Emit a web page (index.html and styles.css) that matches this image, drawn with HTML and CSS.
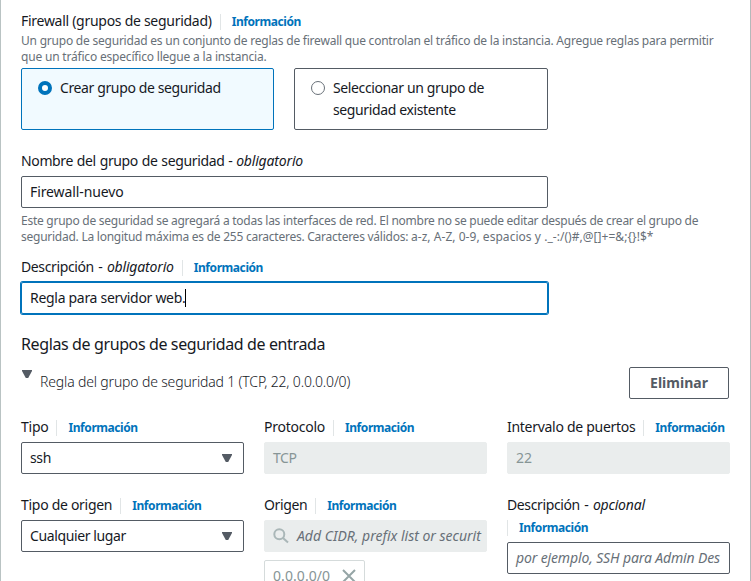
FILE: index.html
```html
<!DOCTYPE html>
<html lang="es">
<head>
<meta charset="utf-8">
<title>Firewall</title>
<link rel="stylesheet" href="styles.css">
</head>
<body>
<main class="panel">
  <section class="firewall">
    <div class="label"><span class="t-fw">Firewall (grupos de seguridad)</span><a class="info">Información</a></div>
    <p class="hint"><span class="line h1">Un grupo de seguridad es un conjunto de reglas de firewall que controlan el tráfico de la instancia. Agregue reglas para permitir</span> <span class="line h2">que un tráfico específico llegue a la instancia.</span></p>
    <div class="tiles">
      <div class="tile selected"><i class="radio"></i><span>Crear grupo de seguridad</span></div>
      <div class="tile"><i class="radio"></i><span>Seleccionar un grupo de<br>seguridad existente</span></div>
    </div>
  </section>
  <section class="name">
    <div class="label"><span class="t-name">Nombre del grupo de seguridad - <em>obligatorio</em></span></div>
    <div class="input wide"><span class="v-name">Firewall-nuevo</span></div>
    <p class="hint"><span class="line h3">Este grupo de seguridad se agregará a todas las interfaces de red. El nombre no se puede editar después de crear el grupo de</span> <span class="line h4">seguridad. La longitud máxima es de 255 caracteres. Caracteres válidos: <span class="chars">a-z, A-Z, 0-9, espacios y ._-:/()#,@[]+=&amp;;{}!$*</span></span></p>
  </section>
  <section class="desc">
    <div class="label"><span class="t-desc">Descripción - <em>obligatorio</em></span><a class="info">Información</a></div>
    <div class="input wide focus"><span class="v-desc">Regla para servidor web.</span><i class="cursor"></i></div>
  </section>
  <h2>Reglas de grupos de seguridad de entrada</h2>
  <div class="rule-head">
    <svg class="tri" width="10" height="8" viewBox="0 0 10 8"><path d="M0 0h10v1L6.2 8H3.8L0 1z"/></svg>
    <span class="rule-title">Regla del grupo de seguridad 1 (TCP, 22, 0.0.0.0/0)</span>
    <button>Eliminar</button>
  </div>
  <div class="grid">
    <div><div class="label"><span class="t-short">Tipo</span><a class="info">Información</a></div>
      <div class="input"><span>ssh</span><svg class="arrow" width="10" height="8" viewBox="0 0 10 8"><path d="M0 0h10v1L6.2 8H3.8L0 1z"/></svg></div></div>
    <div><div class="label"><span class="t-short">Protocolo</span><a class="info">Información</a></div>
      <div class="input disabled"><span>TCP</span></div></div>
    <div><div class="label"><span class="t-ports">Intervalo de puertos</span><a class="info">Información</a></div>
      <div class="input disabled"><span class="v-port">22</span></div></div>
    <div><div class="label"><span class="t-ports">Tipo de origen</span><a class="info">Información</a></div>
      <div class="input"><span>Cualquier lugar</span><svg class="arrow" width="10" height="8" viewBox="0 0 10 8"><path d="M0 0h10v1L6.2 8H3.8L0 1z"/></svg></div></div>
    <div><div class="label"><span>Origen</span><a class="info">Información</a></div>
      <div class="input disabled search"><svg width="16" height="16" viewBox="0 0 16 16"><circle cx="6.3" cy="6.3" r="5"/><path d="M10 10l5 4.6"/></svg><span class="ph cidr">Add CIDR, prefix list or securit</span></div>
      <div class="token"><span>0.0.0.0/0</span><svg width="14" height="14" viewBox="0 0 14 14"><path d="M1 1l12 12M13 1L1 13"/></svg></div></div>
    <div><div class="label"><span class="t-desc">Descripción - <em>opcional</em></span></div>
      <div class="label below"><a class="info">Información</a></div>
      <div class="input"><span class="ph admin">por ejemplo, SSH para Admin Des</span></div></div>
  </div>
</main>
</body>
</html>
```

FILE: styles.css
```css
* { box-sizing: border-box; }
body { margin: 0; height: 581px; overflow: hidden; background: #fff; color: #16191f; font: 14px/22px "Noto Sans", "Open Sans", sans-serif; letter-spacing: -0.38px; }
.panel { height: 581px; overflow: hidden; border-left: 1px solid #b9c3c3; border-right: 1px solid #b5b9ba; padding: 10px 20px 0; }
.label { display: flex; align-items: center; height: 22px; white-space: nowrap; }
.info { display: flex; align-items: center; height: 16px; margin: 2px 0 0 8px; padding-left: 11px; border-left: 1px solid #e1e5e6; color: #0073bb; font-size: 12px; font-weight: 700; letter-spacing: -0.43px; }
.below .info { margin-left: 0; }
.t-fw { letter-spacing: -0.28px; }
.t-name { letter-spacing: -0.36px; word-spacing: 0.5px; }
.t-desc { word-spacing: 1.2px; }
em { letter-spacing: -0.18px; }
.t-short { letter-spacing: -0.25px; }
.t-ports { letter-spacing: -0.29px; }
.hint { margin: 0; color: #687078; font-size: 12px; line-height: 16px; letter-spacing: -0.25px; }
.line { display: block; white-space: nowrap; }
.h1 { letter-spacing: -0.22px; }
.h2 { letter-spacing: -0.19px; }
.h3 { letter-spacing: -0.26px; }
.chars { letter-spacing: 0.04px; }
.firewall .hint { margin-top: 1px; }
.tiles { display: grid; grid-template-columns: 253px 254px; gap: 20px; margin-top: 3px; }
.tile { display: flex; height: 62px; padding: 8px 15px; border: 1px solid #545b64; border-radius: 2px; }
.tile.selected { background: #f1faff; border-color: #0073bb; }
.radio { flex: none; width: 14px; height: 14px; margin: 4px 8px 0 1px; border: 1px solid #687078; border-radius: 50%; background: #fff; }
.selected .radio { border: 4px solid #0073bb; }
.name { margin-top: 20px; }
.input { display: flex; align-items: center; height: 32px; margin-top: 4px; padding: 0 8px; border: 1px solid #545b64; border-radius: 2px; white-space: nowrap; overflow: hidden; }
.wide { width: 527px; }
.v-name { letter-spacing: -0.1px; }
.v-desc { letter-spacing: -0.3px; }
.v-port { letter-spacing: 0; }
.name .hint { margin-top: 5px; }
.desc { margin-top: 11px; }
.focus { border-color: #0073bb; box-shadow: 0 0 0 1px #0073bb; }
.cursor { width: 1px; height: 18px; background: #000; }
h2 { margin: 19px 0 0; font-size: 16px; line-height: 22px; font-weight: 400; letter-spacing: -0.38px; }
.rule-head { display: flex; align-items: center; height: 32px; margin-top: 12px; padding-right: 1px; }
.rule-title { margin: -2px 0 0 8px; font-weight: 300; letter-spacing: -0.16px; white-space: nowrap; }
svg { flex: none; }
.tri { align-self: flex-start; margin: 3px 0 0 1px; }
.tri path, .arrow path { fill: #545b64; }
.arrow { margin: 0 3px 0 auto; }
button { width: 100px; height: 32px; margin-left: auto; padding: 0 0 2px; border: 1px solid #545b64; border-radius: 2px; background: #fff; color: #545b64; font: 700 14px "Noto Sans", sans-serif; }
.grid { display: grid; grid-template-columns: repeat(3, 223px); column-gap: 20px; row-gap: 20px; margin-top: 17px; }
.disabled { border-color: #eaeded; background: #eaeded; color: #879596; }
.ph { color: #687078; font-style: italic; }
.cidr { letter-spacing: 0; }
.admin { letter-spacing: -0.13px; }
.search svg { margin-right: 8px; fill: none; stroke: #aab7b8; stroke-width: 2; }
.token { display: flex; align-items: center; width: 101px; height: 32px; margin-top: 8px; padding: 0 8px; border: 1px solid #d5dbdb; border-radius: 2px; color: #879596; letter-spacing: 0.07px; }
.token svg { margin-left: auto; stroke: #95a5a6; stroke-width: 2; }
```
